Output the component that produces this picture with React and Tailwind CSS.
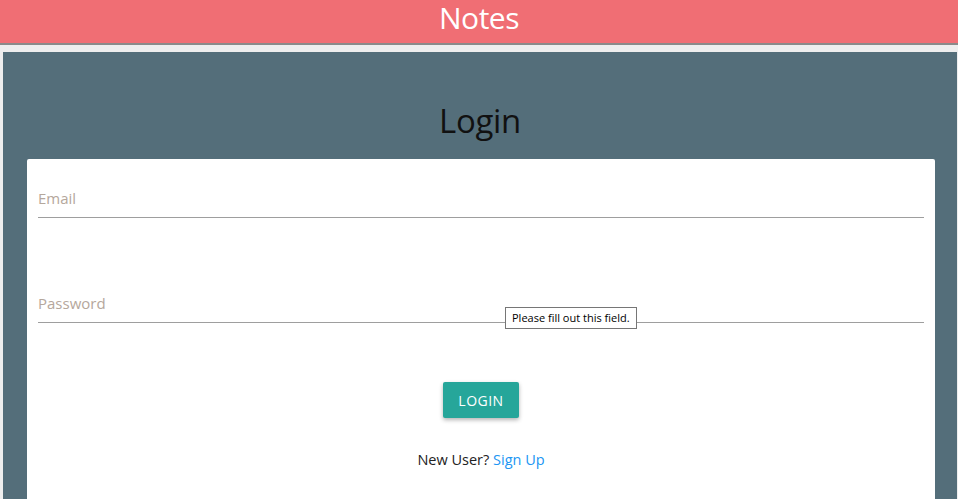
import React, { useState } from 'react';

export default function App() {
  const [form, setForm] = useState({ email: '', password: '' });

  const handleChange = (e) => {
    setForm({ ...form, [e.target.name]: e.target.value });
  };

  const inputClasses = "w-full h-[44px] pt-[4px] bg-transparent border-0 border-b border-[#9e9e9e] text-[15px] text-[#333] placeholder-[#b5a79c] outline-none";

  return (
    <div className="h-[499px] bg-[#eeeeee] font-['Open_Sans',sans-serif] overflow-hidden">
      {/* top bar */}
      <div className="h-[45px] bg-[#f06e74] border-b-2 border-[#8a8a8a] flex justify-center">
        <h1 className="text-white text-[30px] leading-[36px] tracking-[-0.5px]">Notes</h1>
      </div>

      <div className="mt-[7px] ml-[3px] mr-px bg-[#546e7a] pt-[47px] h-[520px]">
        <h2 className="text-center text-[#111] text-[33px] leading-[44px] mb-[16px] tracking-[-0.3px]">Login</h2>

        <div className="ml-6 mr-[22px] bg-white rounded-[2px] px-[11px] pt-[15px] pb-16">
          <form onSubmit={(e) => e.preventDefault()}>
            <input
              type="email"
              name="email"
              placeholder="Email"
              className={inputClasses}
              onChange={handleChange}
            />

            <div className="relative mt-[61px]">
              <input
                type="password"
                name="password"
                placeholder="Password"
                className={inputClasses}
                onChange={handleChange}
              />
              <div className="absolute left-[467px] top-[28px] bg-white border border-[#767676] px-[6px] h-[22px] flex items-center text-[11px] text-black font-['Open_Sans',sans-serif]">
                Please fill out this field.
              </div>
            </div>

            <div className="flex justify-center mt-[59px]">
              <button
                type="submit"
                className="w-[76px] h-[36px] bg-[#26a69a] text-white text-[14px] tracking-[0.5px] rounded-[2px] shadow-[0_2px_4px_rgba(0,0,0,0.3)]"
              >
                LOGIN
              </button>
            </div>

            <p className="text-center text-[14.5px] text-[#222] mt-[31px]">
              New User? <a href="#" className="text-[#2196f3]">Sign Up</a>
            </p>
          </form>
        </div>
      </div>
    </div>
  );
}
